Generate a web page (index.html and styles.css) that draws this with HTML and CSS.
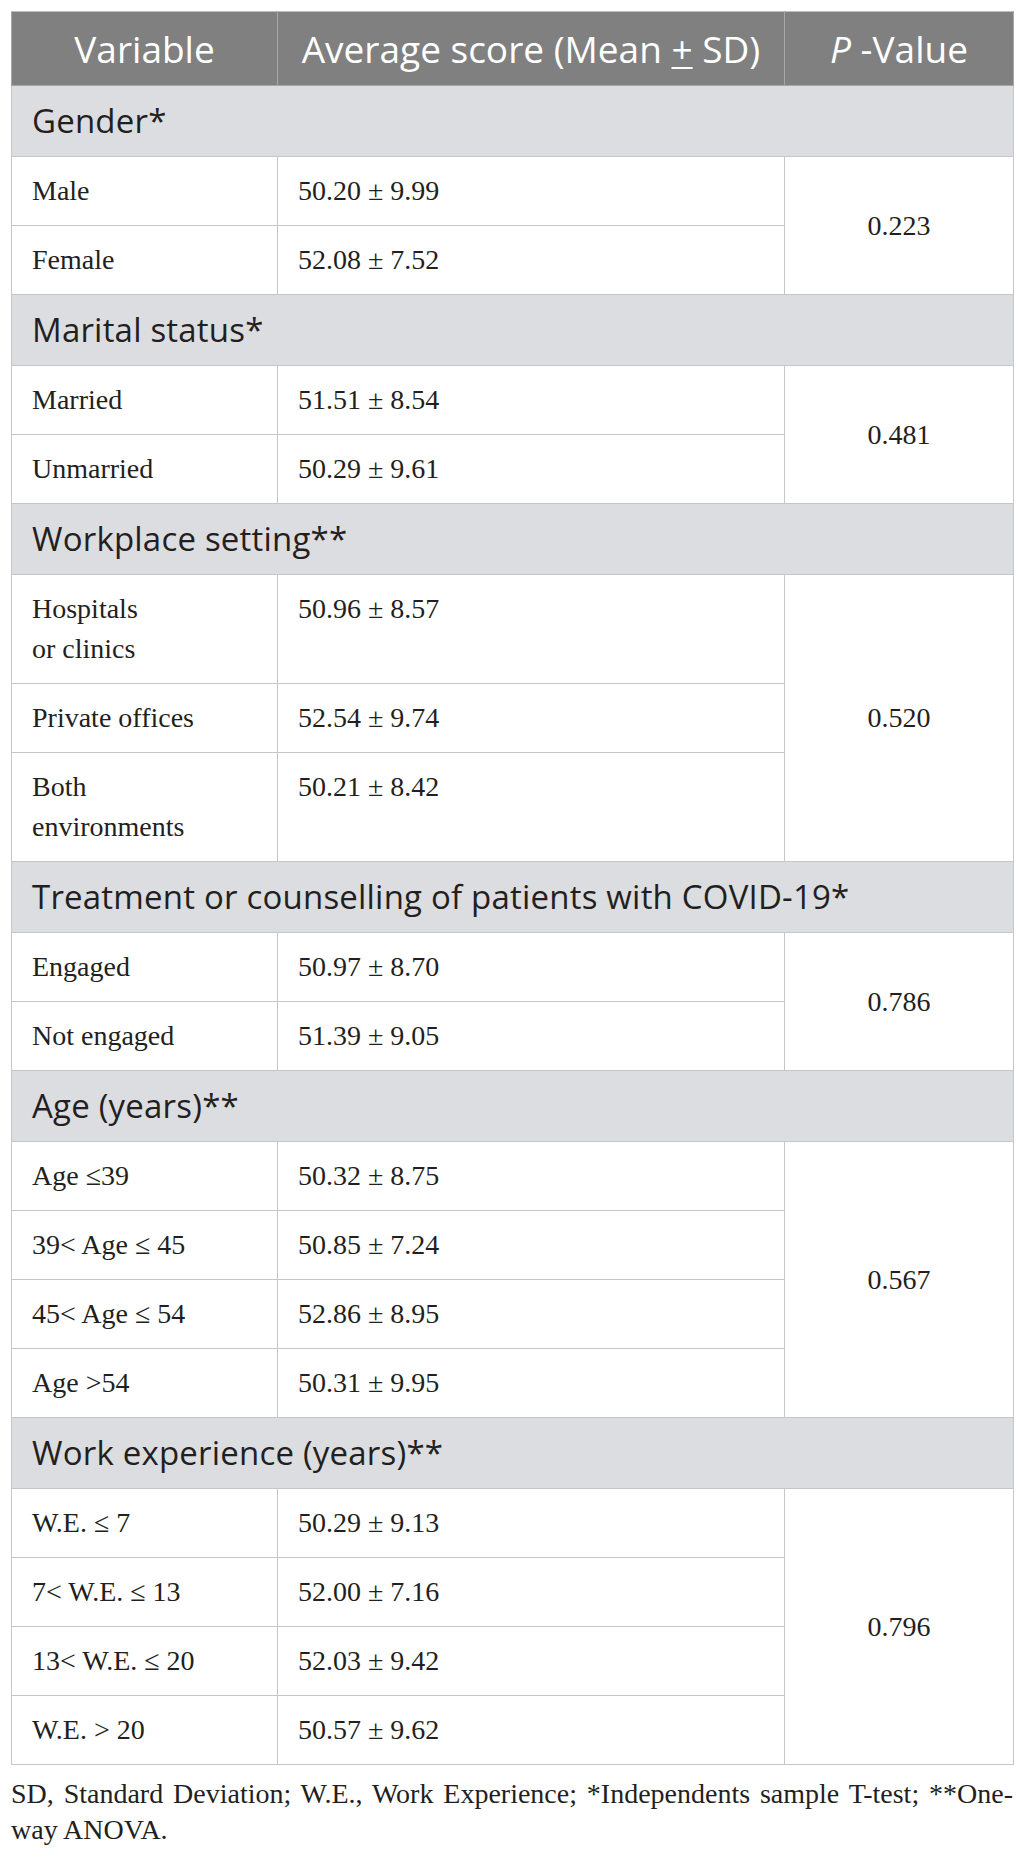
FILE: index.html
```html
<!DOCTYPE html>
<html lang="en">

<head>
    <meta charset="UTF-8">
    <meta name="viewport" content="width=device-width, initial-scale=1.0">
    <link rel="stylesheet" href="styles.css">
    <title>Average score by variable</title>
</head>

<body>

    <div class="sheet">
        <table class="scores">
            <colgroup>
                <col class="col-var">
                <col class="col-avg">
                <col class="col-p">
            </colgroup>
            <thead>
                <tr>
                    <th>Variable</th>
                    <th>Average score (Mean <u>+</u> SD)</th>
                    <th><i>P</i> -Value</th>
                </tr>
            </thead>
            <tbody>
                <tr class="group">
                    <td colspan="3">Gender*</td>
                </tr>
                <tr>
                    <td>Male</td>
                    <td>50.20 ± 9.99</td>
                    <td class="pval" rowspan="2">0.223</td>
                </tr>
                <tr>
                    <td>Female</td>
                    <td>52.08 ± 7.52</td>
                </tr>

                <tr class="group">
                    <td colspan="3">Marital status*</td>
                </tr>
                <tr>
                    <td>Married</td>
                    <td>51.51 ± 8.54</td>
                    <td class="pval" rowspan="2">0.481</td>
                </tr>
                <tr>
                    <td>Unmarried</td>
                    <td>50.29 ± 9.61</td>
                </tr>

                <tr class="group">
                    <td colspan="3">Workplace setting**</td>
                </tr>
                <tr>
                    <td>Hospitals<br>or clinics</td>
                    <td>50.96 ± 8.57</td>
                    <td class="pval" rowspan="3">0.520</td>
                </tr>
                <tr>
                    <td>Private offices</td>
                    <td>52.54 ± 9.74</td>
                </tr>
                <tr>
                    <td>Both<br>environments</td>
                    <td>50.21 ± 8.42</td>
                </tr>

                <tr class="group">
                    <td colspan="3">Treatment or counselling of patients with COVID-19*</td>
                </tr>
                <tr>
                    <td>Engaged</td>
                    <td>50.97 ± 8.70</td>
                    <td class="pval" rowspan="2">0.786</td>
                </tr>
                <tr>
                    <td>Not engaged</td>
                    <td>51.39 ± 9.05</td>
                </tr>

                <tr class="group">
                    <td colspan="3">Age (years)**</td>
                </tr>
                <tr>
                    <td>Age ≤39</td>
                    <td>50.32 ± 8.75</td>
                    <td class="pval" rowspan="4">0.567</td>
                </tr>
                <tr>
                    <td>39&lt; Age ≤ 45</td>
                    <td>50.85 ± 7.24</td>
                </tr>
                <tr>
                    <td>45&lt; Age ≤ 54</td>
                    <td>52.86 ± 8.95</td>
                </tr>
                <tr>
                    <td>Age &gt;54</td>
                    <td>50.31 ± 9.95</td>
                </tr>

                <tr class="group">
                    <td colspan="3">Work experience (years)**</td>
                </tr>
                <tr>
                    <td>W.E. ≤ 7</td>
                    <td>50.29 ± 9.13</td>
                    <td class="pval" rowspan="4">0.796</td>
                </tr>
                <tr>
                    <td>7&lt; W.E. ≤ 13</td>
                    <td>52.00 ± 7.16</td>
                </tr>
                <tr>
                    <td>13&lt; W.E. ≤ 20</td>
                    <td>52.03 ± 9.42</td>
                </tr>
                <tr>
                    <td>W.E. &gt; 20</td>
                    <td>50.57 ± 9.62</td>
                </tr>
            </tbody>
        </table>

        <p class="note">SD, Standard Deviation; W.E., Work Experience; *Independents sample T-test; **One-way ANOVA.</p>
    </div>

</body>

</html>
```

FILE: styles.css
```css
body {
    margin: 0;
    padding: 0;
    background-color: #fff;
    color: #231f20;
    font-family: "Liberation Serif", "Times New Roman", serif;
}

.sheet {
    padding: 11px 13px 0 11px;
}

.scores {
    width: 1002px;
    border-collapse: collapse;
    table-layout: fixed;
    border: 1px solid #bdbdbd;
}

.col-var {
    width: 266px;
}

.col-avg {
    width: 507px;
}

.col-p {
    width: 229px;
}

.scores th {
    background-color: #808080;
    color: #fff;
    font-family: "Open Sans", "Liberation Sans", sans-serif;
    font-weight: 400;
    font-size: 37px;
    line-height: 40px;
    height: 73px;
    padding: 0 4px;
    border: 1px solid #a6a6a6;
    border-top-color: #bdbdbd;
    text-align: center;
    vertical-align: middle;
}

.scores th u {
    text-decoration-thickness: 2px;
    text-underline-offset: 4px;
}

.scores td {
    font-size: 28px;
    line-height: 40px;
    padding: 14px 20px 14px 20px;
    border: 1px solid #c6c6c6;
    vertical-align: top;
    text-align: left;
}

.scores .group td {
    background-color: #dcdde0;
    font-family: "Open Sans", "Liberation Sans", sans-serif;
    font-size: 33px;
    letter-spacing: 0.2px;
    line-height: 40px;
    padding: 15px 20px;
    color: #231f20;
}

.scores td.pval {
    text-align: center;
    vertical-align: middle;
}

.note {
    width: 1002px;
    margin: 11px 0 0 0;
    font-size: 28px;
    line-height: 36px;
    text-align: justify;
}
```
